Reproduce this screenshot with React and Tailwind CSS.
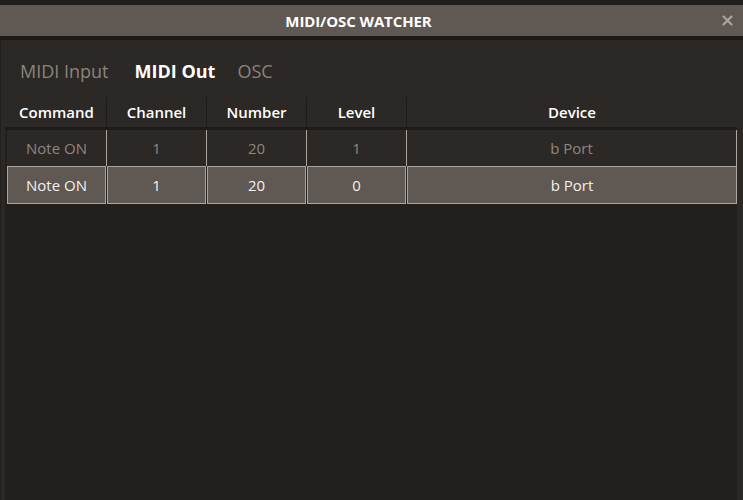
import React from 'react';

const rows = [
  { command: 'Note ON', channel: '1', number: '20', level: '1', device: 'b Port', selected: false },
  { command: 'Note ON', channel: '1', number: '20', level: '0', device: 'b Port', selected: true },
];

const cols = [
  { key: 'command', label: 'Command', w: 'w-[100px]' },
  { key: 'channel', label: 'Channel', w: 'w-[100px]' },
  { key: 'number', label: 'Number', w: 'w-[100px]' },
  { key: 'level', label: 'Level', w: 'w-[100px]' },
  { key: 'device', label: 'Device', w: 'flex-1' },
];

const App = () => {
  return (
    <div
      className="w-[743px] h-[500px] flex flex-col bg-[#221e1b] overflow-hidden"
      style={{ fontFamily: '"Open Sans", "Liberation Sans", sans-serif' }}
    >
      <div className="h-[5px] bg-[#221e1b]" />
      <div className="h-[31px] bg-[#5f5853] flex items-center justify-center relative pr-[26px]">
        <span className="text-[15px] font-bold text-white tracking-[-0.1px] pt-[1px]">
          MIDI/OSC WATCHER
        </span>
        <svg className="absolute right-[10px] top-[10px]" width="11" height="11" viewBox="0 0 11 11">
          <path d="M1.5 1.5 L9.5 9.5 M9.5 1.5 L1.5 9.5" stroke="#aaa49f" strokeWidth="2.2" strokeLinecap="round" />
        </svg>
      </div>
      <div className="h-[4px] bg-[#1d1a18]" />
      <div className="flex-1 flex flex-col bg-[#2b2825] border-l border-[#221e1b] pl-[4px] pr-[6px]">
        <div className="h-[57px] flex items-center pl-[15px] pt-[5px] text-[18px]">
          <span className="text-[#8a847f]">MIDI Input</span>
          <span className="text-white font-bold ml-[26px]">MIDI Out</span>
          <span className="text-[#8a847f] ml-[22px]">OSC</span>
        </div>
        <div className="h-[30px] flex pl-[2px]">
          {cols.map((c, i) => (
            <div
              key={c.key}
              className={`${c.w} flex items-center justify-center text-[15px] font-semibold text-white ${i < cols.length - 1 ? 'border-r border-[#1d1a18]' : ''}`}
            >
              {c.label}
            </div>
          ))}
        </div>
        <div className="flex-1 flex flex-col bg-[#221f1c] border-t-[3px] border-[#1d1a18] pl-[2px]">
          {rows.map((r, ri) =>
            r.selected ? (
              <div key={ri} className="h-[38px] flex gap-[1px] bg-[#221f1c]">
                {cols.map((c) => (
                  <div
                    key={c.key}
                    className={`${c.key === 'device' ? 'flex-1' : 'w-[99px]'} bg-[#5f5853] border border-[#aaa49f] flex items-center justify-center text-[15px] text-[#f4f0ec]`}
                  >
                    {r[c.key]}
                  </div>
                ))}
              </div>
            ) : (
              <div key={ri} className="h-[36px] flex bg-[#2b2825]">
                {cols.map((c) => (
                  <div
                    key={c.key}
                    className={`${c.w} border-r border-[#aaa49f] flex items-center justify-center text-[15px] text-[#8d8782]`}
                  >
                    {r[c.key]}
                  </div>
                ))}
              </div>
            )
          )}
        </div>
      </div>
    </div>
  );
};

export default App;
